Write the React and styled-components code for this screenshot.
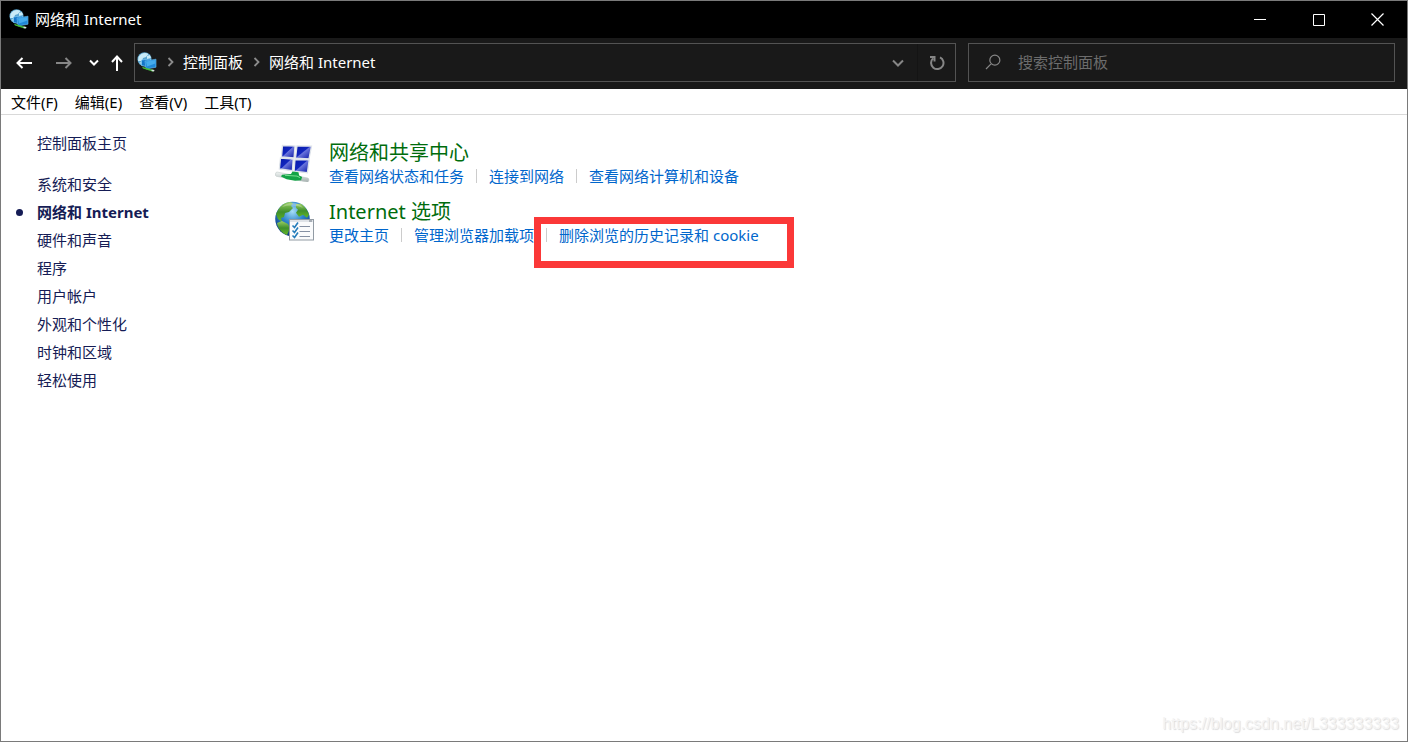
import React from "react";
import styled, { createGlobalStyle } from "styled-components";

const GlobalStyle = createGlobalStyle`
  * { box-sizing: border-box; }
  body { margin: 0; background: #fff; }
  body, button, input {
    font-family: "Noto Sans", "Noto Sans CJK SC", sans-serif;
    font-size: 15px;
    line-height: 20px;
  }
  button { border: 0; padding: 0; background: none; color: inherit; cursor: pointer; }
  ul { list-style: none; margin: 0; padding: 0; }
  a { text-decoration: none; color: inherit; }
  a:hover { text-decoration: underline; }
  svg { display: block; flex: none; }
`;

const Window = styled.div`
  position: relative;
  display: flex;
  flex-direction: column;
  min-height: 100vh;
  border: 1px solid #7a7a7a;
  background: #fff;
`;

const TitleBar = styled.header`
  display: flex;
  align-items: stretch;
  height: 37px;
  padding-left: 8px;
  background: #000;
  color: #fff;
`;

const WindowTitle = styled.div`
  flex: 1;
  display: flex;
  align-items: center;
  gap: 6px;
  padding-bottom: 2px;
`;

const CaptionButton = styled.button`
  display: flex;
  align-items: center;
  justify-content: center;
  width: 59px;
  &:hover { background: #333; }
`;

const NavBar = styled.div`
  display: flex;
  align-items: stretch;
  height: 51px;
  padding: 5px 12px 7px 7px;
  background: #191919;
  color: #fff;
`;

const NavButton = styled.button`
  display: flex;
  align-items: center;
  justify-content: center;
  width: ${(p) => p.$width}px;
  color: ${(p) => (p.$dim ? "#868686" : "#fff")};
`;

const AddressBar = styled.div`
  flex: 2 1 0;
  display: flex;
  align-items: stretch;
  margin-right: 12px;
  padding-left: 2px;
  border: 1px solid #535353;
`;

const Crumbs = styled.nav`
  flex: 1;
  display: flex;
  align-items: center;
  padding-bottom: 2px;
`;

const CrumbArrow = styled.span`
  display: flex;
  justify-content: center;
  width: 26px;
  color: #8c8c8c;
`;

const AddressButton = styled(NavButton)`
  color: #868686;
  border-left: ${(p) => (p.$divided ? "1px solid #141414" : "0")};
`;

const SearchBox = styled.label`
  flex: 1 1 0;
  display: flex;
  align-items: center;
  gap: 16px;
  padding: 0 0 2px 16px;
  border: 1px solid #535353;
  color: #868686;
`;

const SearchInput = styled.input`
  flex: 1;
  min-width: 0;
  border: 0;
  padding: 0;
  outline: 0;
  background: none;
  color: #fff;
  &::placeholder { color: #6c6c6c; opacity: 1; }
`;

const MenuBar = styled.div`
  display: flex;
  gap: 1px;
  height: 26px;
  padding-left: 2px;
  border-bottom: 1px solid #d9d9d9;
  color: #000;
`;

const MenuItem = styled.button`
  padding: 0 8px;
  &:hover { background: #e5f3ff; }
`;

const Body = styled.div`
  flex: 1;
  display: flex;
`;

const Sidebar = styled.nav`
  width: 258px;
  padding: 14px 16px 24px 14px;
  color: #151c55;
`;

const SideLink = styled.a`
  display: flex;
  align-items: center;
  height: 28px;
  margin-bottom: ${(p) => (p.$home ? 13 : 0)}px;
  font-weight: ${(p) => (p.$current ? 700 : 400)};
`;

const Marker = styled.span`
  width: 22px;
  &::before {
    content: "";
    display: ${(p) => (p.$on ? "block" : "none")};
    width: 7px;
    height: 7px;
    margin-left: 1px;
    border-radius: 50%;
    background: #151c55;
  }
`;

const Main = styled.main`
  flex: 1;
  padding: 24px 16px;
`;

const Category = styled.section`
  display: flex;
  gap: 14px;
  height: 59px;
`;

const CategoryIcon = styled.div`
  padding-top: 3px;
`;

const CategoryTitle = styled.h2`
  margin: 0;
  font-size: 20px;
  line-height: 28px;
  font-weight: 400;
  color: #006c0c;
`;

const TaskList = styled.ul`
  display: flex;
  flex-wrap: wrap;
  line-height: 18px;
  color: #0066cc;
`;

const Task = styled.li`
  position: relative;
  display: flex;
  align-items: center;
  & + &::before {
    content: "";
    width: 1px;
    height: 14px;
    margin: 0 12px;
    background: #ccc;
  }
`;

const Highlight = styled.span`
  position: absolute;
  inset: -9px -35px -24px 0;
  border: 7px solid #fb3838;
  pointer-events: none;
`;

const Watermark = styled.div`
  position: absolute;
  right: 8px;
  bottom: 7px;
  font-family: "Liberation Sans", sans-serif;
  font-size: 16px;
  color: #f4f4f4;
  text-shadow: 1px 1px 1px #dcdcdc;
`;

function NetworkIcon() {
  return (
    <svg width="20" height="20" viewBox="0 0 20 20" aria-hidden="true">
      <circle cx="7.5" cy="7.3" r="7" fill="#5aa5cf" />
      <path d="M1.500 5c2-4 7-5 10-3L9 5 6 6 5 9 1 9zM10 4l3-1 1 3-4 1z" fill="#c9ebf7" />
      <path d="M2 11l3-2 3 2v3z" fill="#a4d3e8" />
      <path d="M4.500 8l9-1v8.500l-9-2z" fill="#1476c8" stroke="#8bd3f8" strokeWidth=".6" />
      <path d="M8 9l11-1.800v8L9 17z" fill="#2089d8" stroke="#6cc0f2" strokeWidth=".6" />
      <path d="M9 9.500l9.300-1.500v3.600L10 14.500z" fill="#45acec" />
      <path d="M5 14.800l8 2.200 4 1-1 1.800-10-3.200z" fill="#45b83b" />
      <path d="M14.500 17.500l3 .5-.5 1.600-2.500-.5z" fill="#d7e0df" />
    </svg>
  );
}

function SharingIcon() {
  return (
    <svg width="40" height="40" viewBox="0 0 40 40" aria-hidden="true">
      <defs>
        <linearGradient id="screen" x1="0" y1="0" x2="1" y2="1">
          <stop offset="0" stopColor="#0619a8" />
          <stop offset=".45" stopColor="#1125bd" />
          <stop offset=".5" stopColor="#6873dc" />
          <stop offset="1" stopColor="#0714a0" />
        </linearGradient>
        <linearGradient id="pipe" x1="0" y1="0" x2="0" y2="1">
          <stop offset="0" stopColor="#f1f5f4" />
          <stop offset="1" stopColor="#a6b1b0" />
        </linearGradient>
      </defs>
      <g fill="url(#screen)" stroke="#dfe4ea" strokeWidth="1.3">
        <path d="M7.500 3.500l12.500.5-1 12-12.500-1z" />
        <path d="M22 4l14.500.2-2.500 12.600-13.500-.7z" />
        <path d="M5.500 16l12.700 1-.8 11.700-13-1.700z" />
        <path d="M20 17.500l14.200.4-1.800 12.800-13.300-1.500z" />
      </g>
      <path d="M2 30l31 6.100c1.500.5 1 4.200-.7 4l-31-5.800c-1.500-.5-1-4.400.7-4.300z" fill="url(#pipe)" stroke="#b8c2c0" strokeWidth=".5" />
      <path d="M7 32.800l9-.8 1.500-2.500 6 .8.6 3.300 3 1.400-1 3.200-6 .6-8.500-1.600-5.600-2.800z" fill="#13a346" />
      <path d="M10 33.300l12 .8 3 1.500" stroke="#77df91" strokeWidth="1" fill="none" />
    </svg>
  );
}

function InternetOptionsIcon() {
  return (
    <svg width="40" height="40" viewBox="0 0 40 40" aria-hidden="true">
      <defs>
        <radialGradient id="sea" cx=".5" cy=".28" r=".75">
          <stop offset="0" stopColor="#a6def7" />
          <stop offset=".45" stopColor="#2c83cb" />
          <stop offset="1" stopColor="#092d75" />
        </radialGradient>
        <linearGradient id="land" x1="0" y1="0" x2="0" y2="1">
          <stop offset="0" stopColor="#9bcf62" />
          <stop offset=".5" stopColor="#3f8f2c" />
          <stop offset="1" stopColor="#65b925" />
        </linearGradient>
      </defs>
      <circle cx="17.5" cy="18" r="17.3" fill="url(#sea)" />
      <g fill="url(#land)">
        <path d="M3 9C6 4 10 1.500 15 1l3 1-2 3 2 2-4 4-4 1-1 4-3 1 1 4-4-3-2-5z" />
        <path d="M2 22l5-2 6 3 2 4-3 7c-5-2-9-6-10-12z" />
        <path d="M21 3l5-.2c4 2.500 7 7 8 11l-2 3-4-3-4 2-3-4 2-3-2-2z" />
      </g>
      <path d="M7 6c6-6 17-5 21 1-7-3-14-3-21-1z" fill="#fff" opacity=".28" />
      <rect x="14.5" y="18.5" width="24" height="20.500" fill="#fafbfc" stroke="#929ba4" />
      <path d="M15 19h23v2H15z" fill="#dfe3e8" />
      <path d="M34 20h3" stroke="#6f7983" />
      <path d="M24.500 25.500H35M24.500 30.500H35M24.500 35.500H35" stroke="#8590a3" />
      <path d="M17.500 24.500l2 2 3.500-5M17.500 29.500l2 2 3.500-5M17.500 34.500l2 2 3.500-5" fill="none" stroke="#267dbb" strokeWidth="1.6" />
    </svg>
  );
}

function Stroke({ w, h, d, weight = 2 }) {
  return (
    <svg width={w} height={h} viewBox={`0 0 ${w} ${h}`} fill="none" stroke="currentColor" strokeWidth={weight} aria-hidden="true">
      <path d={d} />
    </svg>
  );
}

const DOWN = "M1 1.500l4 4 4-4";
const RIGHT = "M1.500 1l4 4-4 4";
const sections = ["系统和安全", "网络和 Internet", "硬件和声音", "程序", "用户帐户", "外观和个性化", "时钟和区域", "轻松使用"];
const categories = [
  { title: "网络和共享中心", Icon: SharingIcon, tasks: ["查看网络状态和任务", "连接到网络", "查看网络计算机和设备"] },
  { title: "Internet 选项", Icon: InternetOptionsIcon, tasks: ["更改主页", "管理浏览器加载项", "删除浏览的历史记录和 cookie"], marked: 2 },
];

export default function App() {
  return (
    <Window>
      <GlobalStyle />
      <TitleBar>
        <WindowTitle><NetworkIcon />网络和 Internet</WindowTitle>
        <CaptionButton aria-label="最小化"><Stroke w={12} h={12} d="M0 5.500h12" weight={1} /></CaptionButton>
        <CaptionButton aria-label="最大化"><Stroke w={12} h={12} d="M.5.5h11v11H.5z" weight={1} /></CaptionButton>
        <CaptionButton aria-label="关闭"><Stroke w={13} h={13} d="M.5.5l12 12M12.500.5l-12 12" weight={1.2} /></CaptionButton>
      </TitleBar>
      <NavBar>
        <NavButton $width={32} aria-label="后退"><Stroke w={16} h={12} d="M16 6H1.500M6.500 1l-5 5 5 5" /></NavButton>
        <NavButton $width={48} $dim aria-label="前进"><Stroke w={16} h={12} d="M0 6h14.500M9.500 1l5 5-5 5" /></NavButton>
        <NavButton $width={12} aria-label="最近浏览的位置"><Stroke w={10} h={7} d={DOWN} /></NavButton>
        <NavButton $width={34} aria-label="上移"><Stroke w={12} h={16} d="M6 16V1.500M1 7l5-5.500L11 7" /></NavButton>
        <AddressBar>
          <Crumbs>
            <NetworkIcon />
            <CrumbArrow><Stroke w={7} h={10} d={RIGHT} weight={1.8} /></CrumbArrow>
            <a href="#panel">控制面板</a>
            <CrumbArrow><Stroke w={7} h={10} d={RIGHT} weight={1.8} /></CrumbArrow>
            <a href="#network">网络和 Internet</a>
          </Crumbs>
          <AddressButton $width={38} aria-label="以前的位置"><Stroke w={12} h={8} d="M1 1.500l5 5 5-5" /></AddressButton>
          <AddressButton $width={38} $divided aria-label="刷新"><Stroke w={16} h={16} d="M11 2.300A6.200 6.200 0 1 1 4 3.400M1 2h4.500v4.500" /></AddressButton>
        </AddressBar>
        <SearchBox>
          <Stroke w={17} h={17} d="M6.300 10.700L1 16M6.300 10.700a5 5 0 1 1 7.100-7.100a5 5 0 0 1-7.100 7.100z" weight={1.2} />
          <SearchInput type="text" placeholder="搜索控制面板" aria-label="搜索控制面板" />
        </SearchBox>
      </NavBar>
      <MenuBar>
        {["文件(F)", "编辑(E)", "查看(V)", "工具(T)"].map((t) => <MenuItem key={t}>{t}</MenuItem>)}
      </MenuBar>
      <Body>
        <Sidebar>
          <SideLink href="#home" $home><Marker />控制面板主页</SideLink>
          <ul>
            {sections.map((t, i) => (
              <li key={t}><SideLink href={`#s${i}`} $current={i === 1}><Marker $on={i === 1} />{t}</SideLink></li>
            ))}
          </ul>
        </Sidebar>
        <Main>
          {categories.map(({ title, Icon, tasks, marked }) => (
            <Category key={title}>
              <CategoryIcon><Icon /></CategoryIcon>
              <div>
                <CategoryTitle><a href="#category">{title}</a></CategoryTitle>
                <TaskList>
                  {tasks.map((t, i) => (
                    <Task key={t}><a href="#task">{t}</a>{i === marked && <Highlight />}</Task>
                  ))}
                </TaskList>
              </div>
            </Category>
          ))}
        </Main>
      </Body>
      <Watermark>https://blog.csdn.net/L333333333</Watermark>
    </Window>
  );
}
